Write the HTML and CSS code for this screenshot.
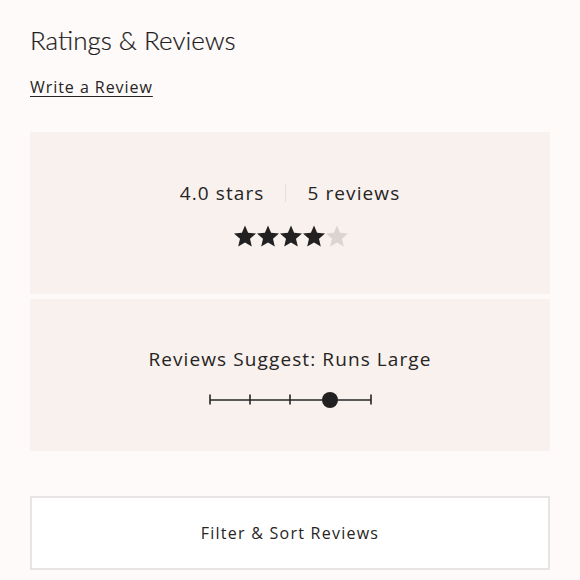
FILE: index.html
```html
<!DOCTYPE html>
<html>
<head>
<meta charset="utf-8">
<link rel="stylesheet" href="styles.css">
</head>
<body>
<div class="page">
  <h2 class="title">Ratings &amp; Reviews</h2>
  <a class="write" href="#">Write a Review</a>
  <div class="panels">
    <section class="panel summary">
      <div class="stats">
        <span>4.0 stars</span>
        <span class="divider"></span>
        <span>5 reviews</span>
      </div>
      <div class="stars">
        <svg viewBox="0 0 24 24" class="star"><path d="M12 1.5l3.1 7.3 7.9.7-6 5.2 1.8 7.8L12 18.4l-6.8 4.1 1.8-7.8-6-5.2 7.9-.7z"/></svg>
        <svg viewBox="0 0 24 24" class="star"><path d="M12 1.5l3.1 7.3 7.9.7-6 5.2 1.8 7.8L12 18.4l-6.8 4.1 1.8-7.8-6-5.2 7.9-.7z"/></svg>
        <svg viewBox="0 0 24 24" class="star"><path d="M12 1.5l3.1 7.3 7.9.7-6 5.2 1.8 7.8L12 18.4l-6.8 4.1 1.8-7.8-6-5.2 7.9-.7z"/></svg>
        <svg viewBox="0 0 24 24" class="star"><path d="M12 1.5l3.1 7.3 7.9.7-6 5.2 1.8 7.8L12 18.4l-6.8 4.1 1.8-7.8-6-5.2 7.9-.7z"/></svg>
        <svg viewBox="0 0 24 24" class="star empty"><path d="M12 1.5l3.1 7.3 7.9.7-6 5.2 1.8 7.8L12 18.4l-6.8 4.1 1.8-7.8-6-5.2 7.9-.7z"/></svg>
      </div>
    </section>
    <section class="panel fit">
      <div class="fit-label">Reviews Suggest: Runs Large</div>
      <svg class="scale" width="164" height="18" viewBox="0 0 164 18">
        <line x1="1" y1="9" x2="162" y2="9" stroke="#262424" stroke-width="1.6"/>
        <line x1="1" y1="3.5" x2="1" y2="13.5" stroke="#262424" stroke-width="1.6"/>
        <line x1="41" y1="3.5" x2="41" y2="13.5" stroke="#262424" stroke-width="1.6"/>
        <line x1="81" y1="3.5" x2="81" y2="13.5" stroke="#262424" stroke-width="1.6"/>
        <line x1="162" y1="3.5" x2="162" y2="13.5" stroke="#262424" stroke-width="1.6"/>
        <circle cx="121" cy="9" r="8" fill="#222020"/>
      </svg>
    </section>
  </div>
  <button class="filter">Filter &amp; Sort Reviews</button>
</div>
</body>
</html>
```
FILE: styles.css
```css
html, body {
  margin: 0;
  padding: 0;
  background: #fdfaf9;
}
.page {
  padding: 0 30px;
  color: #262424;
  font-family: "Open Sans", sans-serif;
}
.title {
  margin: 0;
  padding-top: 24px;
  font-family: Lato, sans-serif;
  font-weight: 300;
  font-size: 26px;
  line-height: 32px;
  color: #1e1c1c;
  -webkit-text-stroke: 0.2px #1e1c1c;
}
.write {
  display: inline-block;
  margin-top: 20px;
  font-size: 16px;
  line-height: 22px;
  letter-spacing: 0.95px;
  color: #262424;
  text-decoration: underline;
  text-underline-offset: 3px;
}
.panels {
  margin-top: 34px;
  display: flex;
  flex-direction: column;
  gap: 5px;
}
.panel {
  background: #f8f1ed;
  display: flex;
  flex-direction: column;
  align-items: center;
}
.summary {
  height: 162px;
  padding-top: 48px;
  box-sizing: border-box;
}
.stats {
  display: flex;
  align-items: center;
  font-size: 19px;
  letter-spacing: 1.1px;
  line-height: 26px;
}
.divider {
  width: 1px;
  height: 18px;
  background: #e6dfdb;
  margin: 0 21px;
}
.stars {
  display: flex;
  margin-top: 18px;
}
.star {
  width: 24px;
  height: 24px;
  fill: #222020;
  margin-right: -1px;
}
.star.empty {
  fill: #dad5d3;
}
.fit {
  height: 152px;
  padding-top: 47px;
  box-sizing: border-box;
}
.fit-label {
  font-size: 19px;
  letter-spacing: 1.1px;
  line-height: 26px;
}
.scale {
  margin-top: 19px;
  margin-left: 2px;
}
.filter {
  display: block;
  width: 100%;
  margin-top: 45px;
  height: 74px;
  background: #fff;
  border: 2px solid #e8e4e3;
  font-family: "Open Sans", sans-serif;
  font-size: 16px;
  letter-spacing: 1.25px;
  color: #262424;
}
```
